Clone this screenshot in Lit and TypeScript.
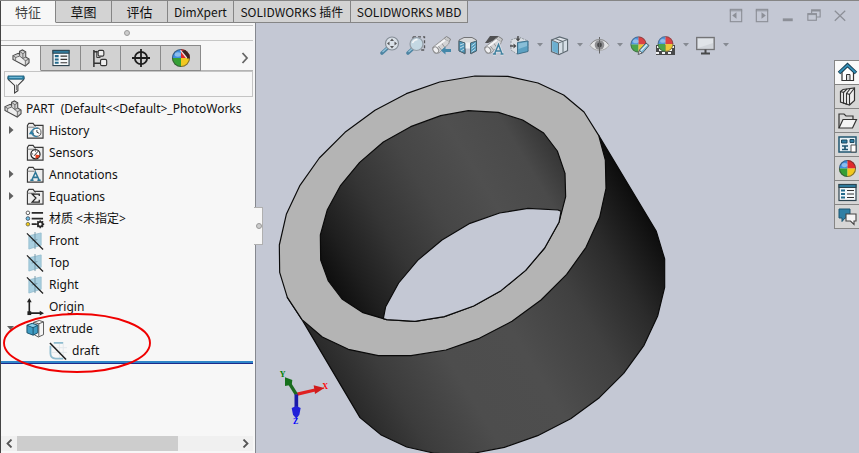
import { LitElement, html, svg, css, nothing, TemplateResult } from "lit";
import { customElement, property, state } from "lit/decorators.js";
import { classMap } from "lit/directives/class-map.js";

const ball = (cx: number, cy: number, r: number) => svg`
  <g transform="translate(${cx} ${cy}) scale(${r})">
    <path d="M0 0V-1A1 1 0 0 0 -1 0Z" fill="#3f8fe0"/>
    <path d="M0 0V-1A1 1 0 0 1 1 0Z" fill="#e02a2c"/>
    <path d="M0 0H-1A1 1 0 0 0 0 1Z" fill="#35a035"/>
    <path d="M0 0H1A1 1 0 0 1 0 1Z" fill="#f2c81e"/>
    <ellipse cx="-.35" cy="-.4" rx=".35" ry=".25" fill="#fff" opacity=".4"/>
    <circle r=".95" fill="none" stroke="#333" stroke-width=".12" opacity=".6"/>
  </g>`;

const folder = svg`
  <path d="M1.500 17V3.500L3 1.500H7.500L9 3.500H18V17Z" fill="#ededed" stroke="#3a3a3a" stroke-width="1.200"/>
  <path d="M1.500 5.500H9L10.500 4" fill="none" stroke="#777"/>`;

const plane = svg`
  <path d="M3 4L16 1V14L3 18Z" fill="#a9cfe0" stroke="#8fb9cc" stroke-width=".8"/>
  <path d="M9.500 0V18M6 9.500L12 8" stroke="#7396a6" fill="none"/>
  <path d="M1 1.500L18 18.500" stroke="#1c1c1c" stroke-width="1.300"/>`;

const part = svg`
  <path d="M1 7L6.500 4.500L8 5.500V2.500L11 1L14.500 3V8.500L18 10.500V14.500L14 18L1 11Z" fill="#d2d2d2" stroke="#4a4a4a" stroke-width="1.100"/>
  <path d="M1 7L4 9L8 7.500L11.500 10V5L8 2.500M11.500 5L14.500 3M8 5.500V7.500M11.500 10L14.500 8.500M11.500 10L14 12.500V18M14 12.500L18 10.500M4 9V12" fill="none" stroke="#5c5c5c" stroke-width=".9"/>
  <path d="M4.500 9.500L8 8.200L13.300 12.700V16.500L4.500 12Z" fill="#efefef"/>`;

const listing = svg`
  <rect x="1" y="1.500" width="17" height="16" fill="#f4f8fa" stroke="#2d4450" stroke-width="1.200"/>
  <rect x="1" y="1.500" width="17" height="3" fill="#2f7a9c" stroke="#2d4450"/>
  <path d="M3 7.500H7M3 11H7M3 14.500H7" stroke="#226a8c" stroke-width="2.200"/>
  <path d="M9 7.500H16M9 11H16M9 14.500H16" stroke="#333" stroke-width="1.200"/>`;

const magnifier = svg`
  <path d="M2 17L7 12.500" stroke="#39799a" stroke-width="3.600" stroke-linecap="round"/>
  <path d="M2.500 16L7 12" stroke="#8fc6de" stroke-width="1.200"/>`;

const telescope = svg`
  <path d="M.5 11.500L12 2.500L17.500 5.500L16.500 8L7 17L2.500 17Z" fill="#d6d6d6" stroke="#8a8a8a" stroke-width=".9"/>
  <path d="M12 2.500L14.500 .5L18.500 3L17.500 5.500" fill="#c8c8c8" stroke="#777"/>
  <path d="M8.500 5.500L12.500 11M5 8.500L9.500 14" fill="none" stroke="#8e8e8e"/>
  <path d="M3 11.500L13 4" stroke="#fff" stroke-width="1.800"/>
  <ellipse cx="3.800" cy="14" rx="2.500" ry="3.300" transform="rotate(-40 3.800 14)" fill="#f8f8f8" stroke="#808080"/>`;

const icons: Record<string, TemplateResult<2>> = {
  part,
  listing,
  history: svg`${folder}<circle cx="11.500" cy="10.800" r="4.300" fill="#fff" stroke="#555"/><path d="M11.500 8.500V10.800L14 12" fill="none" stroke="#333"/><path d="M5.500 9L9 13H3Z" fill="#2f7fa5"/><path d="M5.500 12C6 7 10 6 13 6.500M6 12C7 14.500 9 15.500 12 15.300" fill="none" stroke="#2f7fa5" stroke-width="1.300"/>`,
  sensors: svg`${folder}<circle cx="10" cy="10.800" r="4.800" fill="#fff" stroke="#222" stroke-width="1.300"/><path d="M10 11L14.500 12A4.600 4.600 0 0 1 10 15.500Z" fill="#e2401f"/><path d="M8.500 12.500L13 7.500M6.500 10.500H7.500M10 7V8" stroke="#222"/>`,
  annotations: svg`${folder}<path d="M6 15L10 6.500L14 15M7.500 12H12.500M4.500 15H8M12 15H15.500" fill="none" stroke="#2b7596" stroke-width="1.600"/>`,
  equations: svg`${folder}<path d="M14 8.500V6.500H6.500L10.500 10.500L6.500 14.800H14V12.500" fill="none" stroke="#222" stroke-width="1.300"/>`,
  material: svg`
    <path d="M6 3H18M6 9H18M6 15H11" stroke="#2a2a2a" stroke-width="1.800"/>
    <circle cx="2" cy="3" r="1.900" fill="#fff" stroke="#555"/><circle cx="2" cy="9" r="1.900" fill="#6fc4ea" stroke="#456"/><circle cx="2" cy="15" r="1.900" fill="#f4c913" stroke="#775"/>
    <circle cx="15" cy="15" r="2.500" fill="none" stroke="#2a2a2a" stroke-width="2"/><path d="M15 10.800V12.500M15 17.500V19.200M10.800 15H12.500M17.500 15H19.200M12 12L13.300 13.300M18 12L16.700 13.300M12 18L13.300 16.700M18 18L16.700 16.700" stroke="#2a2a2a" stroke-width="1.500"/>`,
  plane,
  origin: svg`<path d="M3.500 3V16H16" fill="none" stroke="#222" stroke-width="1.700"/><path d="M3.500 0L6 4.500H1ZM19 16L14.500 13.500V18.500Z" fill="#222"/><rect x="1.500" y="14" width="4" height="4" fill="#222"/>`,
  extrude: svg`
    <path d="M8 2.500L14 .5L18.500 2V15.500L13 18L8 15Z" fill="#f4f4f4" stroke="#555"/><path d="M13.500 17.500V4L8 2.500M13.500 4L18.500 2" fill="none" stroke="#555"/>
    <path d="M1 5.500L6.500 3.500L12.500 5.500V13.500L7.500 16L1 13.500Z" fill="#3e9cc4" stroke="#1c4f68"/><path d="M1 5.500L7.500 8V16M7.500 8L12.500 5.500" fill="none" stroke="#1c4f68"/><path d="M2.500 5.700L6.500 4.300L11 5.700L7.300 7.300Z" fill="#8fcfe8"/>`,
  draft: svg`
    <path d="M11 2V18M15 2V18M3 6H19M3 11H19" stroke="#e2e8ec" fill="none"/>
    <path d="M15 1H5M1.500 4V12C1.500 16 4 17.500 7 17.500H15" fill="none" stroke="#8fbccf" stroke-width="1.900"/>
    <path d="M1 1L18 18.500" stroke="#1c1c1c" stroke-width="1.600"/>`,
  config: svg`
    <path d="M2 1V19M2 3H6M2 15H9" stroke="#333" stroke-width="1.600" fill="none"/>
    <path d="M5 2V9M5 9H9" stroke="#333" fill="none"/>
    <rect x="6.500" y="1.500" width="6" height="6" rx="1.500" fill="#eee" stroke="#333" stroke-width="1.200"/>
    <rect x="9" y="11" width="6.500" height="6.500" rx="1.500" fill="#eee" stroke="#333" stroke-width="1.200"/>`,
  target: svg`<circle cx="9.500" cy="9.500" r="6.500" fill="none" stroke="#1e1e1e" stroke-width="1.900"/><path d="M9.500 0V19M0 9.500H19" stroke="#1e1e1e" stroke-width="1.900"/>`,
  ball: svg`${ball(9.5, 9.5, 8.5)}`,
  ballDark: svg`${ball(9.5, 9.5, 9.5)}<path d="M10 2.500L14 1L18.500 6L18.500 10L16 10Z" fill="#3a2424"/><path d="M9 1.500L15.500 9.500" stroke="#f4dede" stroke-width="1.300"/>`,
  filter: svg`<path d="M1 3C1 1 18 1 18 3L17.500 5L11.500 11V16.500L8 19V11L1.500 5Z" fill="#f5f5f5" stroke="#3c3c3c" stroke-width="1.100"/><path d="M1 1H18V4.500H1Z" fill="#2f86ab" stroke="#1c5672" stroke-width=".8"/><path d="M2.500 2.500H16" stroke="#8fd0ea" stroke-width=".8"/><path d="M10 10V16" stroke="#777"/>`,
  zoomFit: svg`${magnifier}<circle cx="12" cy="7.500" r="6.500" fill="#dfe6ec" stroke="#7d868e" stroke-width="1.200"/><path d="M12 2.500L14 5H10ZM12 12.500L14 10H10ZM7 7.500L9.500 5.500V9.500ZM17 7.500L14.500 5.500V9.500Z" fill="#444"/>`,
  zoomArea: svg`<path d="M7 .8H18.500V14H15M7 .8V3" fill="none" stroke="#444" stroke-width="1.300" stroke-dasharray="3 2"/>${magnifier}<circle cx="10.500" cy="8" r="6.500" fill="#c5dbe6" stroke="#8c969e" stroke-width="1.200"/><path d="M6.500 7Q8 3.500 11.500 3.500" fill="none" stroke="#fff" stroke-width="1.500"/>`,
  previous: svg`${telescope}<path d="M9 14.500L13.500 10.500V13H19V16H13.500V18.500Z" fill="#2e7da3"/>`,
  section: svg`
    <path d="M1 4L6 1.500H14L18.500 4V14.500L13 18V8H7V18L1 14.500Z" fill="#dcdcdc" stroke="#666"/>
    <path d="M1 5L7 7V17.500L1 15ZM12.500 7L18.500 5V15L12.500 17.500Z" fill="#3e92b8" stroke="#33515e"/>
    <path d="M2 9L6 7.500M2 12L6 10M3 15L6 13M13.500 10L17.500 7M13.500 13L17.500 10M13.500 16L17.500 13" stroke="#bfe0ee"/>
    <path d="M7.500 6.500V12.500H12V6.500" fill="#f6f6f6"/>`,
  dynamic: svg`<path d="M6 0H15L11 4L4 7H1Z" fill="#3b3b3b"/>${telescope}<path d="M10.500 18L14.500 8.500L18 18M11.500 15H17M9 18H12M16.500 18H19.500" fill="none" stroke="#e8eaee" stroke-width="3"/><path d="M10.500 18L14.500 8.500L18 18M11.500 15H17M9 18H12M16.500 18H19.500" fill="none" stroke="#2b7596" stroke-width="1.500"/>`,
  orient: svg`
    <path d="M1 4L9 1L18 5V15L7 18L1 14Z" fill="#dfe3e6" stroke="#8b9298" stroke-dasharray="2 1"/>
    <path d="M7.500 6.500L18 5V15.500L7.500 18Z" fill="#4b9bc0" stroke="#2b6480"/><path d="M8.500 7.500L17 6V10L8.500 13Z" fill="#7fbdd8"/>
    <path d="M8 0V3M0 10H3.500" stroke="#333" stroke-width="1.400"/><path d="M8 5.500L5.500 2.500H10.500ZM6.500 10L3.500 7.500V12.500Z" fill="#333"/>`,
  display: svg`
    <path d="M1.500 4L9.500 1L17.500 3.500V14.500L9 18.500L1.500 15.500Z" fill="#e4eaee" stroke="#4d5a62" stroke-width="1.200"/>
    <path d="M2.200 4.800L8 7V17.500L2.200 15Z" fill="#5cabd0"/><path d="M9 7L17 4.200V14L9 17.700Z" fill="#d8e3ea"/>
    <path d="M8.500 18V7L1.500 4M8.500 7L17.500 3.500M5 2.500L13 5.500V16" fill="none" stroke="#4d5a62"/>`,
  eye: svg`<path d="M0 9.500C4 1.500 15 1.500 19 9.500C15 16 4 16 0 9.500Z" fill="#e9e9e9" stroke="#a4a4a4"/><circle cx="9.500" cy="9" r="4.800" fill="#858585"/><circle cx="9.500" cy="9" r="2.400" fill="#333"/><path d="M9.500 1V17.500" stroke="#555"/><path d="M1 8C5 2 14 2 18 8" fill="none" stroke="#888"/>`,
  appearance: svg`${ball(8.5, 8.5, 8)}<path d="M8.500 18L9.500 14L16 7L19 9.500L12.500 17Z" fill="#6fb7d8" stroke="#3a4850"/><path d="M8 18.500L9.500 14.500L12 17Z" fill="#f4f4f4" stroke="#444" stroke-width=".8"/><path d="M11 14.500L17 8.500" stroke="#e4f4fb" stroke-width="1.300"/>`,
  scene: svg`<rect x="0" y="9" width="19" height="10" fill="#333"/><path d="M1 10H4V12H1ZM15 10H18V12H15ZM3 13H6V15H3ZM13 13H16V15H13ZM0 16H3V18H0ZM6 16H9V18H6ZM9 18H12V16H15V18Z" fill="#fafafa"/>${ball(9.5, 8, 7.8)}`,
  monitor: svg`<rect x=".7" y="1.500" width="17.500" height="12" fill="#d4d8dc" stroke="#666" stroke-width="1.300"/><path d="M2 3H17V7L2 12Z" fill="#e6e9ec"/><path d="M9.500 13.500V17M5 17.500H14" stroke="#333" stroke-width="2"/>`,
  home: svg`<path d="M4 9V17.500H15.500V9L9.500 3.500Z" fill="#fff" stroke="#333" stroke-width="1.200"/><path d="M8.500 17V11.500H12V17" fill="#ddd" stroke="#333"/><path d="M1 10L9.500 2L18 10" fill="none" stroke="#173f54" stroke-width="3.600"/><path d="M1.500 9.500L9.500 2.200L17.500 9.500" fill="none" stroke="#3590b8" stroke-width="1.800"/>`,
  library: svg`<path d="M2.500 4.500L5 2.500L16.500 1V13.500L11.500 18L2.500 15Z" fill="#eee" stroke="#333" stroke-width="1.200"/><path d="M2.500 4.500L5.500 5.500V16L8.500 17V6.500L12 2M5.500 5.500L9 2M8.500 6.500L11.500 7.500V18M11.500 7.500L16.500 1" fill="none" stroke="#333" stroke-width="1.100"/>`,
  folderOpen: svg`<path d="M1 17V3H6L8 5H15V8" fill="#d8d8d8" stroke="#333" stroke-width="1.200"/><path d="M1 17L5 8.500H18.500L14.500 17Z" fill="#f4f4f4" stroke="#333" stroke-width="1.200"/>`,
  palette: svg`<rect x="1" y="2" width="17" height="15" fill="#eaf2f6" stroke="#1f5670" stroke-width="1.500"/><path d="M3.500 5H9V8H3.500ZM12 4.500H16V7.500H12Z" fill="#2f7fa5" stroke="#1f4a5e"/><path d="M4 14.500H10M7 14V10.500M4 11H10" stroke="#1f5670" stroke-width="1.700"/><path d="M13 10H18V17H13Z" fill="#fff" stroke="#555"/>`,
  forum: svg`<path d="M1 2H12V11H7L4 14.500V11H1Z" fill="#2f7fa5" stroke="#1d5673"/><path d="M8 7H18V14H16V17.500L12.500 14H8Z" fill="#f5f5f5" stroke="#444" stroke-width="1.100"/>`,
  dockLeft: svg`<rect x="3.500" y="2.500" width="12" height="13" fill="none" stroke="#8c8f97" stroke-width="1.200"/><path d="M10 5.500V12.500L5.500 9Z" fill="#8c8f97"/><path d="M3 4H16" stroke="#8c8f97"/>`,
  dockRight: svg`<rect x="3.500" y="2.500" width="12" height="13" fill="none" stroke="#8c8f97" stroke-width="1.200"/><path d="M9 5.500V12.500L13.500 9Z" fill="#8c8f97"/><path d="M3 4H16" stroke="#8c8f97"/>`,
  minimize: svg`<path d="M4 13.500H14.500" stroke="#8c8f97" stroke-width="3"/>`,
  restore: svg`<path d="M7 6.500V3H16V10.500H12M7 4.200H16" fill="none" stroke="#8c8f97" stroke-width="1.200"/><rect x="3" y="7" width="9" height="7" fill="none" stroke="#8c8f97" stroke-width="1.200"/><path d="M3 8H12" stroke="#8c8f97"/>`,
  close: svg`<path d="M4 4L15 14.500M15 4L4 14.500" stroke="#8c8f97" stroke-width="1.300"/>`,
};

@customElement("cad-icon")
class CadIcon extends LitElement {
  static styles = css`
    :host { display: inline-flex; flex: none; width: 18px; height: 18px; }
    .glyph { width: 100%; height: 100%; overflow: visible; }
  `;
  @property() name = "";
  render() {
    return html`<svg class="glyph" viewBox="0 0 19 19" aria-hidden="true">${icons[this.name]}</svg>`;
  }
}

interface Node {
  label: string;
  icon: string;
  level: number;
  twist?: "closed" | "open";
}

const tree: Node[] = [
  { label: "PART  (Default<<Default>_PhotoWorks", icon: "part", level: 0 },
  { label: "History", icon: "history", level: 1, twist: "closed" },
  { label: "Sensors", icon: "sensors", level: 1 },
  { label: "Annotations", icon: "annotations", level: 1, twist: "closed" },
  { label: "Equations", icon: "equations", level: 1, twist: "closed" },
  { label: "材质 <未指定>", icon: "material", level: 1 },
  { label: "Front", icon: "plane", level: 1 },
  { label: "Top", icon: "plane", level: 1 },
  { label: "Right", icon: "plane", level: 1 },
  { label: "Origin", icon: "origin", level: 1 },
  { label: "extrude", icon: "extrude", level: 1, twist: "open" },
  { label: "draft", icon: "draft", level: 2 },
];

@customElement("feature-panel")
class FeaturePanel extends LitElement {
  static styles = css`
    :host { display: flex; flex-direction: column; position: relative; width: 255px; flex: none; box-sizing: border-box; background: #f7f7f7; border-left: 1px solid #444; }
    button { font: inherit; color: inherit; padding: 0; margin: 0; border: 0; background: none; display: flex; align-items: center; justify-content: center; }
    .grip { height: 14px; margin: 2px 2px 4px 0; border: solid #c6c6c6; border-width: 1px 0; display: flex; align-items: center; justify-content: center; }
    .dot { width: 4px; height: 4px; border: 1px solid #9a9a9a; border-radius: 50%; background: #ccc; }
    .managers { display: flex; height: 26px; }
    .manager { box-sizing: border-box; width: 40px; border: solid #8a8a8a; border-width: 1px 1px 1px 0; background: #d2d2d2; }
    .manager.active { background: #f7f7f7; border-bottom-color: #f7f7f7; }
    .more { flex: 1; border-bottom: 1px solid #b4b4b4; margin-right: 2px; padding-right: 4px; justify-content: flex-end; }
    .filter { display: flex; align-items: center; gap: 4px; height: 24px; margin: 0 2px 0 3px; border: 1px solid #c4c4c4; padding-left: 2px; }
    .query { flex: 1; min-width: 0; border: 0; outline: 0; background: none; font: inherit; }
    .tree { list-style: none; margin: 0; padding: 1px 0 0 3px; font-family: "Noto Sans", "Noto Sans CJK SC", sans-serif; }
    .row { display: flex; align-items: center; height: 22px; white-space: pre; overflow: hidden; }
    .label { margin-left: 5px; }
    .root { margin-left: 4px; }
    .twist { width: 22px; height: 22px; flex: none; }
    .branch { padding-left: 45px; }
    .twist svg { width: 22px; height: 22px; }
    .rollback { height: 2px; margin: -1px 2px 0 0; background: #2f86c8; border-bottom: 1px solid #1c2a8c; }
    .scroll { display: flex; height: 15px; margin: auto 2px 2px 0; background: #f0f0f0; }
    .arrow { width: 16px; flex: none; }
    .track { flex: 1; display: flex; }
    .thumb { width: 73%; background: #cdcdcd; }
    .marker { position: absolute; left: 1px; top: 288px; width: 150px; height: 64px; pointer-events: none; }
    .handle { position: absolute; left: 100%; top: 184px; margin-left: -1px; width: 9px; height: 38px; box-sizing: border-box; background: #f7f7f7; border: solid #b0b0b0; border-width: 1px 1px 1px 0; z-index: 2; }
    .handle .dot { margin-left: 1px; }
  `;
  @state() active = 0;
  render() {
    const managers = [
      ["FeatureManager", "part"],
      ["PropertyManager", "listing"],
      ["ConfigurationManager", "config"],
      ["DimXpertManager", "target"],
      ["DisplayManager", "ballDark"],
    ];
    return html`
      <div class="grip"><span class="dot"></span></div>
      <div class="managers" role="tablist">
        ${managers.map(([label, icon], i) => html`
          <button class=${classMap({ manager: true, active: i === this.active })} role="tab" aria-label=${label}
            aria-selected=${i === this.active} @click=${() => (this.active = i)}><cad-icon name=${icon}></cad-icon></button>`)}
        <button class="more" aria-label="More managers">
          <svg width="8" height="12" viewBox="0 0 8 12"><path d="M1.500 1L6 6L1.500 11" fill="none" stroke="#666" stroke-width="1.800"/></svg>
        </button>
      </div>
      <div class="filter"><cad-icon name="filter"></cad-icon><input class="query" aria-label="Filter"></div>
      <ul class="tree" role="tree">
        ${tree.map((n) => html`
          <li class=${classMap({ row: true, branch: n.level === 2 })} role="treeitem" aria-level=${n.level + 1}>
            ${n.level === 1 ? this.twist(n) : nothing}
            <cad-icon name=${n.icon}></cad-icon><span class=${n.level ? "label" : "root"}>${n.label}</span>
          </li>`)}
      </ul>
      <div class="rollback"></div>
      <div class="scroll">
        <button class="arrow" aria-label="Scroll left"><svg width="7" height="9" viewBox="0 0 7 9"><path d="M5.500 .5L1.500 4.500L5.500 8.500" fill="none" stroke="#555" stroke-width="1.800"/></svg></button>
        <div class="track"><div class="thumb"></div></div>
        <button class="arrow" aria-label="Scroll right"><svg width="7" height="9" viewBox="0 0 7 9"><path d="M1.500 .5L5.500 4.500L1.500 8.500" fill="none" stroke="#555" stroke-width="1.800"/></svg></button>
      </div>
      <svg class="marker" viewBox="0 0 150 64" aria-hidden="true"><ellipse cx="75" cy="32" rx="73" ry="29" fill="none" stroke="#f00000" stroke-width="1.900"/></svg>
      <button class="handle" aria-label="Collapse panel"><span class="dot"></span></button>
    `;
  }
  twist(n: Node) {
    if (!n.twist) return html`<span class="twist"></span>`;
    const d = n.twist === "closed" ? "M5 6L9.500 10L5 14Z" : "M3 8H10L6.500 12Z";
    return html`<button class="twist" aria-label="Toggle ${n.label}"><svg viewBox="0 0 22 22"><path d=${d} fill="#606060"/></svg></button>`;
  }
}

@customElement("model-view")
class ModelView extends LitElement {
  static styles = css`
    :host { display: block; flex: 1; min-width: 0; padding-left: 9px; }
    .scene { display: block; width: 420px; height: 393px; }
    .axis { font: bold 24px "Liberation Serif", serif; }
  `;
  render() {
    const inner = "610,152 700,157 773,180 836,219 877,273 900,340 902,410 882,487 839,564 782,631 708,692 626,738 538,770 450,784 365,779 294,758 231,717 190,663 167,600 166,525 187,449 227,376 284,307 355,246 437,200 527,167";
    return html`
      <svg class="scene" viewBox="0 0 1260 1179" role="img" aria-label="Extruded ring">
        <defs>
          <linearGradient id="side" gradientUnits="userSpaceOnUse" x1="110" y1="775" x2="1006" y2="236">
            <stop offset="0" stop-color="#2a2a2a"/><stop offset=".12" stop-color="#3c3c3c"/><stop offset=".3" stop-color="#4d4d4d"/>
            <stop offset=".5" stop-color="#4e4e4e"/><stop offset=".7" stop-color="#404040"/><stop offset=".85" stop-color="#2b2b2b"/><stop offset="1" stop-color="#0d0d0d"/>
          </linearGradient>
          <linearGradient id="bore" gradientUnits="userSpaceOnUse" x1="200" y1="702" x2="886" y2="290">
            <stop offset="0" stop-color="#0c0c0c"/><stop offset=".12" stop-color="#1e1e1e"/><stop offset=".3" stop-color="#353535"/>
            <stop offset=".5" stop-color="#464646"/><stop offset=".7" stop-color="#4f4f4f"/><stop offset=".88" stop-color="#4a4a4a"/><stop offset="1" stop-color="#363636"/>
          </linearGradient>
        </defs>
        <g stroke="#0a0a0a" stroke-width="3.500" stroke-linejoin="round">
          <polygon fill="url(#side)" points="67,712 111,779 285,1073 347,1124 425,1161 505,1179 570,1184 630,1179 718,1162 818,1127 917,1076 1003,1013 1076,940 1137,856 1178,768 1199,682 1199,597 1174,514 1001,226 600,400"/>
          <polygon fill="#b4b4b4" points="630,48 729,49 819,69 896,105 957,156 1001,226 1021,300 1023,385 1004,472 963,562 905,643 828,720 741,784 643,835 543,870 438,887 340,887 250,868 172,831 111,779 67,712 44,637 43,555 64,463 105,376 163,294 240,217 330,151 424,101 524,66"/>
          <polygon fill="url(#bore)" points=${inner}/>
          <polygon fill="#c4c8d4" points="355,776 362,740 401,669 458,601 531,540 615,490 704,459 789,445 879,450 888,454 882,487 839,564 782,631 708,692 626,738 538,770 450,784 365,779"/>
        </g>
        <path d="M94 1003L150 990" stroke="#e02020" stroke-width="10"/><path d="M146 976L178 984L150 1002Z" fill="#d01c1c"/>
        <path d="M94 1003L72 968" stroke="#1c6a20" stroke-width="10"/><path d="M60 952L82 960L80 974L60 978Z" fill="#15701c"/>
        <path d="M94 1003V1050" stroke="#1a1aa8" stroke-width="11"/><path d="M80 1044L94 1038L107 1044L103 1064L94 1076L84 1064Z" fill="#2020d8"/>
        <text class="axis" x="172" y="988" fill="#ff0000">X</text>
        <text class="axis" x="44" y="950" fill="#008000">Y</text>
        <text class="axis" x="84" y="1093" fill="#0000ff">Z</text>
      </svg>`;
  }
}

@customElement("app-root")
class AppRoot extends LitElement {
  static styles = css`
    :host { display: flex; flex-direction: column; height: 100vh; overflow: hidden; background: #c4c8d4; color: #111; font: 12px/16px "Open Sans", "Noto Sans CJK SC", sans-serif; }
    button { font: inherit; color: inherit; padding: 0; margin: 0; border: 0; background: none; }
    .header { display: flex; flex: none; height: 23px; box-sizing: border-box; border-top: 1px solid #858585; }
    .tabs { display: flex; border-left: 1px solid #444; }
    .tab { min-width: 56px; padding: 0 6px; font: 13px/16px "Noto Sans CJK SC", sans-serif; border: solid #858585; border-width: 0 1px 1px 0; background: #d3d3d3; white-space: nowrap; }
    .tab.latin { font-size: 12px; }
    .tab.wide { min-width: 117px; }
    .tab.active { background: #f7f7f7; border-bottom-color: #f7f7f7; min-width: 55px; color: #444; }
    .window { display: flex; margin: 6px 6px 0 auto; height: 18px; }
    .window button { width: 26px; display: flex; justify-content: center; }
    .work { display: flex; flex: 1; min-height: 0; }
    .viewport { display: flex; flex-direction: column; flex: 1; min-width: 0; border-left: 1px solid #85888f; box-sizing: border-box; overflow: hidden; }
    .tools { display: flex; justify-content: center; flex: none; height: 22px; padding: 11px 6px 4px 0; }
    .tool { width: 26px; display: flex; align-items: center; justify-content: center; }
    .tool cad-icon { width: 19px; height: 19px; opacity: .85; }
    .drop { width: 14px; display: flex; align-items: center; justify-content: center; }
    .stage { display: flex; align-items: flex-start; flex: 1; min-height: 0; }
    .tasks { display: flex; flex-direction: column; flex: none; width: 25px; box-sizing: border-box; border: solid #858585; border-width: 1px 0 0 1px; }
    .task { height: 24px; box-sizing: border-box; border-bottom: 1px solid #858585; background: #d6d6d6; display: flex; align-items: center; justify-content: center; }
    .task cad-icon { width: 19px; height: 19px; }
    .task.active { background: #fafafa; }
  `;
  @state() tab = 0;
  render() {
    const tabs = ["特征", "草图", "评估", "DimXpert", "SOLIDWORKS 插件", "SOLIDWORKS MBD"];
    const windows = [["Dock left", "dockLeft"], ["Dock right", "dockRight"], ["Minimize", "minimize"], ["Restore", "restore"], ["Close", "close"]];
    const tools: [string, string, boolean][] = [
      ["Zoom to fit", "zoomFit", false], ["Zoom to area", "zoomArea", false], ["Previous view", "previous", false],
      ["Section view", "section", false], ["Dynamic annotation views", "dynamic", false], ["View orientation", "orient", true],
      ["Display style", "display", true], ["Hide or show items", "eye", true], ["Edit appearance", "appearance", false],
      ["Apply scene", "scene", true], ["View settings", "monitor", true],
    ];
    const tasks = [["Resources", "home"], ["Design library", "library"], ["File explorer", "folderOpen"], ["View palette", "palette"], ["Appearances", "ball"], ["Custom properties", "listing"], ["Forum", "forum"]];
    return html`
      <header class="header">
        <div class="tabs" role="tablist">
          ${tabs.map((t, i) => html`<button role="tab" aria-selected=${i === this.tab}
            class=${classMap({ tab: true, latin: i > 2, wide: i > 3, active: i === this.tab })} @click=${() => (this.tab = i)}>${t}</button>`)}
        </div>
        <div class="window">${windows.map(([l, i]) => html`<button aria-label=${l}><cad-icon name=${i}></cad-icon></button>`)}</div>
      </header>
      <div class="work">
        <feature-panel></feature-panel>
        <main class="viewport">
          <div class="tools" role="toolbar">
            ${tools.map(([l, i, drop]) => html`<button class="tool" aria-label=${l}><cad-icon name=${i}></cad-icon></button>${drop
              ? html`<button class="drop" aria-label="${l} options"><svg width="6" height="4" viewBox="0 0 6 4"><path d="M0 0H6L3 3.500Z" fill="#868a92"/></svg></button>` : nothing}`)}
          </div>
          <div class="stage">
            <model-view></model-view>
            <nav class="tasks">${tasks.map(([l, i], n) => html`<button class=${classMap({ task: true, active: n === 0 })} aria-label=${l}><cad-icon name=${i}></cad-icon></button>`)}</nav>
          </div>
        </main>
      </div>`;
  }
}
